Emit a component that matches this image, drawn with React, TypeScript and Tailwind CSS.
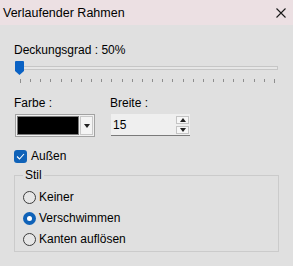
const ticks = Array.from({ length: 26 }, (_, i) => i)

function Radio({ label, checked }: { label: string; checked?: boolean }) {
  return (
    <label className="flex h-[16px] items-center">
      {checked ? (
        <span className="ml-[8px] flex h-[13px] w-[13px] items-center justify-center rounded-full bg-[#0f62b8]">
          <span className="h-[5px] w-[5px] rounded-full bg-white" />
        </span>
      ) : (
        <span className="ml-[8px] h-[13px] w-[13px] rounded-full border border-[#3c3c3c] bg-[#e6e6e6]" />
      )}
      <span className="ml-[3px]">{label}</span>
    </label>
  )
}

export default function App() {
  return (
    <div className="flex h-[266px] w-[293px] flex-col bg-[#e0e0e0] font-['Liberation_Sans',sans-serif] text-[12px] leading-[16px] text-black">
      <div className="flex h-[25px] items-center justify-between bg-[#ece0e3] pl-[3px] pr-[6px]">
        <span className="text-[12.5px]">Verlaufender Rahmen</span>
        <svg width="10" height="10" viewBox="0 0 10 10" className="mr-[1px]">
          <path d="M0.5 0.5 L9.5 9.5 M9.5 0.5 L0.5 9.5" stroke="#1a1a1a" strokeWidth="1.1" />
        </svg>
      </div>

      <div className="flex flex-col px-[14px]">
        <div className="mt-[17px]">Deckungsgrad : 50%</div>

        <div className="relative mt-[3px] h-[14px]">
          <div className="absolute left-[1px] top-[5px] h-[4px] w-[263px] border border-[#c6c6c6] bg-[#e6e6e6]" />
          <svg width="9" height="14" viewBox="0 0 9 14" className="absolute left-[1px] top-0">
            <path d="M1 0 H8 Q9 0 9 1 V10 L4.5 14 L0 10 V1 Q0 0 1 0 Z" fill="#0a62c4" />
          </svg>
        </div>

        <div className="mt-[4px] flex justify-between pl-[6px] pr-[4px]">
          {ticks.map((t) => (
            <span key={t} className={`w-px bg-[#8e8e8e] ${t === 0 || t === 25 ? "h-[4px]" : "h-[3px]"}`} />
          ))}
        </div>

        <div className="mt-[12px] grid grid-cols-[96px_1fr]">
          <div>Farbe :</div>
          <div>Breite :</div>
          <div className="mt-[3px] ml-[1px] flex h-[23px] w-[80px] border border-[#a2a2a2] bg-[#f0f0f0] p-px">
            <div className="w-[62px] border border-[#7a7a7a] bg-black" />
            <div className="ml-[1px] flex flex-1 items-center justify-center border border-[#c8c8c8] bg-[#f4f4f4]">
              <svg width="6" height="4" viewBox="0 0 6 4">
                <path d="M0 0 H6 L3 4 Z" fill="#222" />
              </svg>
            </div>
          </div>
          <div className="mt-[3px] ml-[1px] flex h-[22px] w-[79px] items-center border-b border-[#7a7a7a] bg-[#efefef] pl-[2px] pr-[1px]">
            <span className="flex-1">15</span>
            <div className="flex flex-col gap-[2px]">
              <div className="flex h-[8px] w-[13px] items-center justify-center border border-[#c4c4c4] bg-[#f6f6f6]">
                <svg width="6" height="4" viewBox="0 0 6 4">
                  <path d="M0 4 H6 L3 0 Z" fill="#222" />
                </svg>
              </div>
              <div className="flex h-[8px] w-[13px] items-center justify-center border border-[#c4c4c4] bg-[#f6f6f6]">
                <svg width="6" height="4" viewBox="0 0 6 4">
                  <path d="M0 0 H6 L3 4 Z" fill="#222" />
                </svg>
              </div>
            </div>
          </div>
        </div>

        <label className="mt-[11px] flex h-[16px] items-center">
          <span className="flex h-[13px] w-[13px] items-center justify-center rounded-[3px] bg-[#0f62b8]">
            <svg width="9" height="7" viewBox="0 0 9 7">
              <path d="M1 3.5 L3.5 6 L8 1" stroke="white" strokeWidth="1.1" fill="none" />
            </svg>
          </span>
          <span className="ml-[4px]">Außen</span>
        </label>

        <fieldset className="mt-[3px] flex flex-col gap-[5px] border border-[#cbcbcb] pt-[6px] pb-[4px]">
          <legend className="ml-[8px] px-[2px]">Stil</legend>
          <Radio label="Keiner" />
          <Radio label="Verschwimmen" checked />
          <Radio label="Kanten auflösen" />
        </fieldset>
      </div>
    </div>
  )
}
